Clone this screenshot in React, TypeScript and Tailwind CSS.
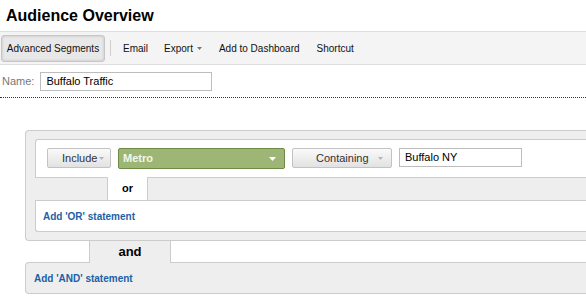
import React from 'react';

function Caret({ className }: { className: string }) {
  return (
    <svg width="7" height="4" viewBox="0 0 7 4" className={className}>
      <path d="M0 0h7L3.5 4z" fill="currentColor" />
    </svg>
  );
}

function GrayButton({ label, className }: { label: string; className: string }) {
  return (
    <div
      className={`flex h-[20px] items-center rounded-[2px] border border-[#c3c3c3] bg-gradient-to-b from-[#fafafa] to-[#e2e2e2] text-[11px] text-[#333] ${className}`}
    >
      <span>{label}</span>
      <Caret className="ml-[2px] mt-px text-[#b5b5b5] w-[5px] h-[3px]" />
    </div>
  );
}

export default function App() {
  return (
    <div className="h-[304px] w-[586px] overflow-hidden bg-white text-black" style={{ fontFamily: '"Liberation Sans", Arial, sans-serif' }}>
      {/* Title */}
      <div className="h-[31px] pl-[6px] pt-[8px] text-[16px] font-bold leading-[16px]">Audience Overview</div>

      {/* Toolbar */}
      <div className="flex h-[34px] items-center border-y border-[#dedede] bg-[#f4f4f4] text-[10px] text-[#111]">
        <div className="ml-px flex h-[27px] w-[104px] items-center justify-center rounded-[3px] border border-[#c6c6c6] bg-[#e8e8e8] shadow-[inset_0_0_3px_rgba(0,0,0,0.18)]">
          Advanced Segments
        </div>
        <div className="ml-[5px] h-[16px] w-px bg-[#d0d0d0]" />
        <span className="ml-[12px]">Email</span>
        <span className="ml-[16px] flex items-center">
          Export
          <Caret className="ml-[4px] text-[#777] w-[5px] h-[3px]" />
        </span>
        <span className="ml-[17px]">Add to Dashboard</span>
        <span className="ml-[17px]">Shortcut</span>
      </div>

      {/* Name */}
      <div className="flex h-[32px] items-center text-[11px]">
        <span className="ml-[2px] text-[#777]">Name:</span>
        <div className="ml-[6px] flex h-[19px] w-[172px] items-center border border-[#bdbdbd] pl-[5px]">Buffalo Traffic</div>
      </div>
      <div className="border-t border-dotted border-[#333]" />

      {/* Segment editor */}
      <div className="mt-[32px] ml-[25px]">
        <div className="rounded-tl-[4px] rounded-bl-[4px] border border-r-0 border-[#cccccc] bg-[#eeeeee] pl-[9px] pt-[8px] pb-[8px]">
          {/* condition row */}
          <div className="flex h-[39px] items-start rounded-tl-[3px] border border-r-0 border-[#cccccc] bg-white pl-[11px] pt-[8px]">
            <GrayButton label="Include" className="w-[64px] pl-[14px]" />
            <div className="ml-[7px] flex h-[21px] w-[167px] items-center justify-between rounded-[2px] border border-[#6e8b45] bg-[#9db676] pl-[4px] pr-[8px] text-[11px] font-bold text-[#f2f6ea]">
              <span>Metro</span>
              <Caret className="text-white" />
            </div>
            <GrayButton label="Containing" className="ml-[7px] w-[100px] pl-[23px] gap-[7px]" />
            <div className="ml-[7px] flex h-[19px] w-[123px] items-center border border-[#bdbdbd] pl-[5px] text-[11px]">Buffalo NY</div>
          </div>
          <div className="relative -mt-px ml-[72px] flex h-[23px] w-[41px] items-center justify-center border-x border-[#cccccc] bg-white text-[11px] font-bold">
            or
          </div>
          <div className="flex h-[32px] items-center rounded-bl-[3px] border border-r-0 border-[#cccccc] bg-white pl-[7px] text-[10px] font-bold text-[#1d5fa5]">
            Add 'OR' statement
          </div>
        </div>
        <div className="relative z-10 -mb-px ml-[64px] flex h-[22px] w-[82px] items-center justify-center border-x border-[#cccccc] bg-[#eeeeee] text-[13px] font-bold">
          and
        </div>
        <div className="flex h-[32px] items-center rounded-tl-[4px] rounded-bl-[4px] border border-r-0 border-[#cccccc] bg-[#eeeeee] pl-[8px] text-[10px] font-bold text-[#1d5fa5]">
          Add 'AND' statement
        </div>
      </div>
    </div>
  );
}
